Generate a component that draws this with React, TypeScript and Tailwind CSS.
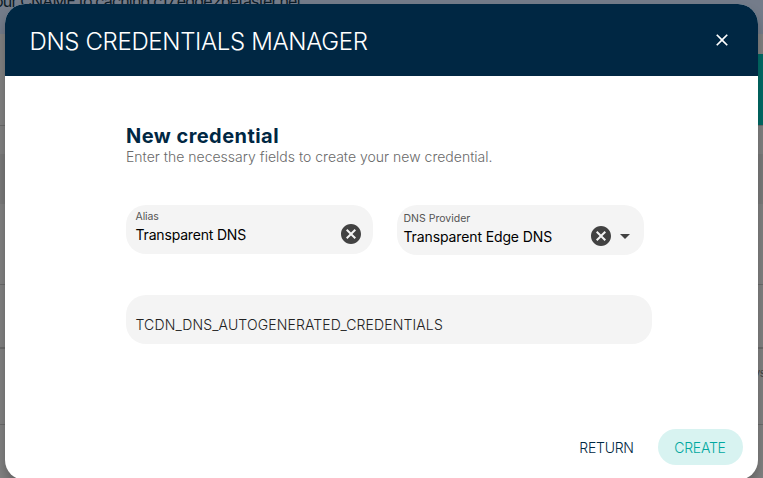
import { MdArrowDropDown, MdCancel, MdClose } from "react-icons/md";

function Backdrop() {
  return (
    <div className="absolute inset-0 overflow-hidden bg-[#828282] text-[#0a1a26]">
      <div className="flex h-[34px] items-start bg-[#747c8a]">
        <p className="-ml-[6px] -mt-[9px] whitespace-nowrap text-[16px] leading-[20px] tracking-[-0.83px]">
          our CNAME to caching.c17.edge2befaster.net
        </p>
      </div>
      <div className="flex h-[91px] justify-end pt-5">
        <div className="w-8 bg-[#006b66]" />
      </div>
      <div className="h-px bg-[#6c6c6c]" />
      <div className="h-7" />
      <div className="h-[50px] bg-[#7b7b7b]" />
      <div className="h-20" />
      <div className="h-px bg-[#6c6c6c]" />
      <div className="h-[62px]" />
      <div className="h-0.5 bg-[#6c6c6c]" />
      <div className="flex h-[75px] justify-end pt-[17px]">
        <span className="w-[9px] text-[11px] leading-[14px] tracking-[-0.5px] text-[#454545]">ys</span>
      </div>
      <div className="h-px bg-[#6c6c6c]" />
    </div>
  );
}

export default function App() {
  return (
    <div className="relative h-[478px] w-[763px] overflow-hidden font-['Inter',sans-serif]">
      <Backdrop />
      <section
        role="dialog"
        className="absolute left-[5px] top-1 flex h-[476px] w-[753px] flex-col overflow-hidden rounded-[20px] bg-white shadow-[0_8px_12px_rgba(0,0,0,0.25)]"
      >
        <header className="flex h-[72px] shrink-0 items-center justify-between bg-[#002743] pl-[24.5px] pr-[26.5px] text-white">
          <h1 className="whitespace-nowrap pt-[3px] text-[24px] font-light leading-8 tracking-[-0.35px]">
            DNS CREDENTIALS MANAGER
          </h1>
          <button aria-label="Close">
            <MdClose size={20} />
          </button>
        </header>

        <main className="flex-1 pl-[121px] pt-12">
          <h2 className="text-[20px] font-bold leading-6 tracking-[0.45px] text-[#002743]">New credential</h2>
          <p className="-mt-px whitespace-nowrap text-[14px] font-light leading-5 tracking-[0.01px] text-[#6a6a6a]">
            Enter the necessary fields to create your new credential.
          </p>

          <div className="mt-[38px] flex gap-6">
            <label className="flex h-[49px] w-[247px] justify-between rounded-[20px] bg-[#f4f4f4] pl-[9.5px] pr-[10px]">
              <span className="flex flex-col whitespace-nowrap pt-[5px]">
                <span className="text-[10.5px] leading-[14px] tracking-[-0.1px] text-[#555]">Alias</span>
                <span className="text-[14px] leading-[22px] tracking-[-0.18px] text-black">Transparent DNS</span>
              </span>
              <MdCancel size={24} className="mt-[17px] text-[#424242]" />
            </label>
            <label className="flex h-[50px] w-[247px] rounded-[20px] bg-[#f4f4f4] pl-[6.5px] pr-[7px]">
              <span className="flex flex-1 flex-col whitespace-nowrap pt-[7px]">
                <span className="text-[10.5px] leading-[14px] text-[#555]">DNS Provider</span>
                <span className="text-[14px] leading-[22px] tracking-[-0.12px] text-black">Transparent Edge DNS</span>
              </span>
              <MdCancel size={24} className="mt-[19px] text-[#424242]" />
              <MdArrowDropDown size={24} className="mt-[19px] text-[#424242]" />
            </label>
          </div>

          <div className="mt-10 flex h-[49px] w-[526px] items-start rounded-[20px] bg-[#f4f4f4] pl-[9.5px] pt-[19px]">
            <span className="text-[14px] font-light leading-[22px] tracking-[0.13px] text-[#222]">
              TCDN_DNS_AUTOGENERATED_CREDENTIALS
            </span>
          </div>
        </main>

        <footer className="mb-[15px] flex h-9 shrink-0 justify-end pr-[15px] text-[14px] font-light tracking-[-0.25px]">
          <button className="w-[103px] text-[#002743]">RETURN</button>
          <button className="w-[85px] rounded-full bg-[#d8f3f1] pr-px text-[#00a8a0]">CREATE</button>
        </footer>
      </section>
    </div>
  );
}
